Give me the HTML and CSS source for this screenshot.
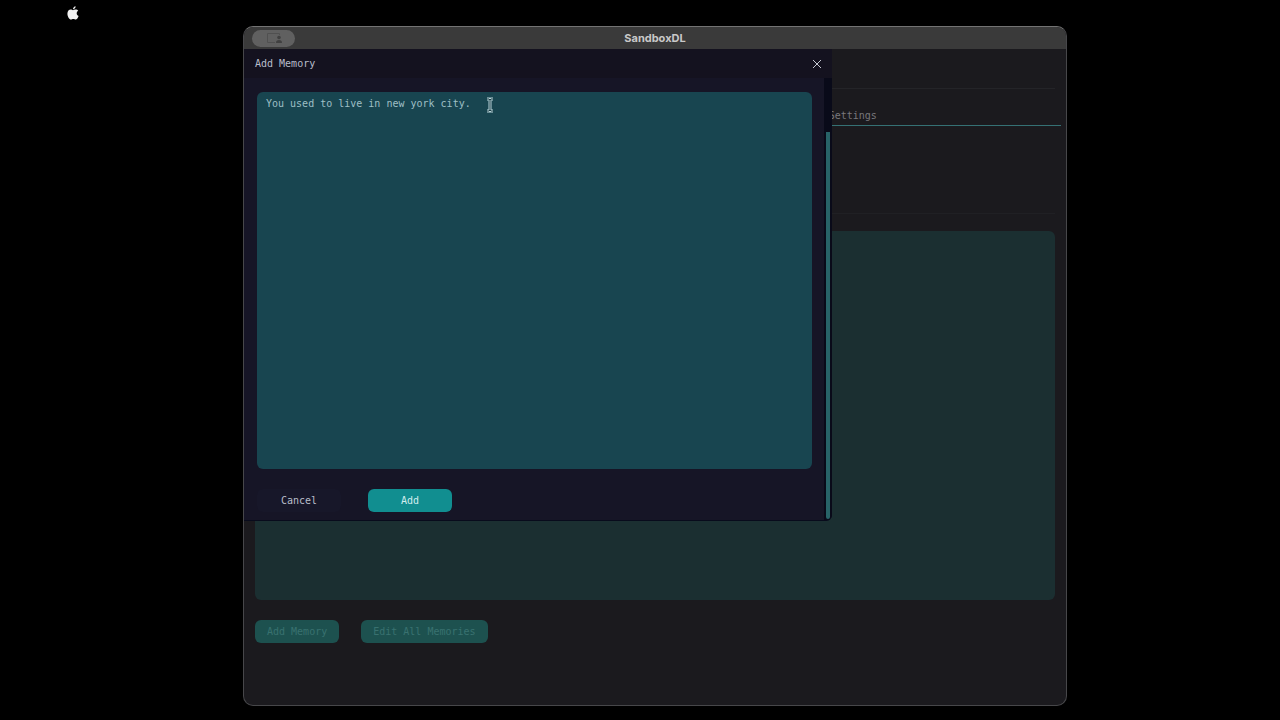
FILE: index.html
```
<!DOCTYPE html>
<html lang="en">
<head>
    <meta charset="UTF-8">
    <meta name="viewport" content="width=device-width, initial-scale=1.0">
    <title>SandboxDL</title>
    <link rel="stylesheet" href="styles.css">
</head>
<body>
    <div class="menu-bar">
        <svg class="apple" viewBox="0 0 12 14" aria-hidden="true">
            <path d="M8.6 0.3C8.7 1.9 7.5 3.2 6 3.2C5.9 1.8 7.2 0.5 8.6 0.3ZM6 4.2C6.7 4.2 7.5 3.5 8.7 3.5C9.8 3.5 10.7 4 11.2 4.8C9 6.1 9.3 9.1 11.6 10C11 11.7 9.9 13.5 8.7 13.5C7.8 13.5 7.4 13 6.3 13C5.2 13 4.8 13.5 4 13.5C2.3 13.5 0.4 10.4 0.4 7.7C0.4 5 2 3.5 3.7 3.5C4.7 3.5 5.4 4.2 6 4.2Z"/>
        </svg>
    </div>

    <div class="window">
        <header class="title-bar">
            <button class="share-pill" type="button" aria-label="Screen sharing">
                <svg viewBox="0 0 18 12" aria-hidden="true">
                    <path class="screen" d="M10 10.500H2.500V1.500H14.500V3"/>
                    <circle cx="14" cy="5.500" r="1.800"/>
                    <path d="M11 11C11 8.800 12 8 14 8C16 8 17 8.800 17 11Z"/>
                </svg>
            </button>
            <h1>SandboxDL</h1>
        </header>

        <div class="content">
            <main class="page">
                <div class="top-strip"></div>
                <nav class="tabs">
                    <a class="tab" href="#settings">Settings</a>
                </nav>
                <div class="options"></div>
                <div class="memories"></div>
                <div class="page-actions">
                    <button class="btn btn-dim" type="button">Add Memory</button>
                    <button class="btn btn-dim" type="button">Edit All Memories</button>
                </div>
            </main>

            <section class="dialog" role="dialog" aria-labelledby="dialog-title">
                <div class="dialog-header">
                    <h2 id="dialog-title"><label for="memory">Add Memory</label></h2>
                    <button class="close" type="button" aria-label="Close">
                        <svg viewBox="0 0 10 10" aria-hidden="true">
                            <path d="M1 1L9 9M9 1L1 9"/>
                        </svg>
                    </button>
                </div>
                <div class="dialog-main">
                    <form class="dialog-form">
                        <div class="editor">
                            <textarea id="memory" spellcheck="false">You used to live in new york city.</textarea>
                            <svg class="pointer" viewBox="0 0 10 16" aria-hidden="true">
                                <path class="pointer-edge" d="M2 2H4L5 3L6 2H8M5 3V13M2 14H4L5 13L6 14H8"/>
                                <path class="pointer-core" d="M2 2H4L5 3L6 2H8M5 3V13M2 14H4L5 13L6 14H8"/>
                            </svg>
                        </div>
                        <div class="dialog-actions">
                            <button class="btn btn-cancel" type="button">Cancel</button>
                            <button class="btn btn-add" type="button">Add</button>
                        </div>
                    </form>
                    <div class="scroll-track">
                        <div class="scroll-thumb"></div>
                    </div>
                </div>
            </section>
        </div>
    </div>
</body>
</html>
```
FILE: styles.css
```
* {
    box-sizing: border-box;
}
body {
    margin: 0;
    min-height: 100vh;
    display: flex;
    flex-direction: column;
    background: #000;
    color: #b9bdca;
    font-family: "DejaVu Sans Mono", "Liberation Mono", monospace;
    font-size: 10px;
    line-height: 14px;
}
h1, h2 {
    margin: 0;
    font-size: inherit;
    font-weight: normal;
}
button, textarea {
    font: inherit;
    color: inherit;
    border: none;
}
button {
    padding: 0;
    cursor: pointer;
}
svg {
    display: block;
}

/* desktop */
.menu-bar {
    height: 26px;
    padding: 6px 67px;
}
.apple {
    width: 12px;
    height: 14px;
    fill: #f2f2f2;
}
.window {
    flex: 1;
    display: flex;
    flex-direction: column;
    margin: 0 213px 14px 243px;
    border: 1px solid #47474a;
    border-top-color: #737373;
    border-radius: 10px;
    background: #1b1a1e;
    overflow: hidden;
}
.title-bar {
    display: grid;
    grid-template-columns: 1fr auto 1fr;
    align-items: center;
    height: 22px;
    padding: 0 8px;
    background: #3a3a3a;
}
.title-bar h1 {
    grid-column: 2;
    color: #c8c8c8;
    font-family: Inter, "Liberation Sans", sans-serif;
    font-size: 11px;
    font-weight: 700;
}
.share-pill {
    display: flex;
    align-items: center;
    justify-content: center;
    width: 43px;
    height: 17px;
    border-radius: 9px;
    background: #606060;
}
.share-pill svg {
    width: 18px;
    height: 12px;
    fill: #404040;
}
.share-pill .screen {
    fill: none;
    stroke: #505050;
}

/* page behind the dialog */
.content {
    flex: 1;
    display: flex;
    position: relative;
}
.page {
    flex: 1;
    display: flex;
    flex-direction: column;
    padding: 0 11px 62px;
}
.top-strip {
    height: 40px;
    border-bottom: 1px solid #242428;
}
.tabs {
    display: grid;
    grid-template-columns: 1fr 1fr;
    height: 37px;
    margin: 0 -6px 0 -11px;
    border-bottom: 1px solid #357174;
}
.tab {
    grid-column: 2;
    padding: 20px 8px 0 0;
    color: #78777c;
    text-align: center;
    text-decoration: none;
}
.options {
    height: 88px;
    border-bottom: 1px solid #202024;
}
.memories {
    flex: 1;
    margin-top: 17px;
    border-radius: 6px;
    background: #1b2f31;
}
.page-actions {
    display: flex;
    gap: 22px;
    margin-top: 20px;
}
.btn {
    height: 23px;
    padding-top: 1px;
    border-radius: 6px;
}
.btn-dim {
    padding: 1px 12px 0;
    background: #1d514f;
    color: #39716f;
}

/* dialog */
.dialog {
    position: absolute;
    top: 0;
    left: 0;
    display: flex;
    flex-direction: column;
    width: 71.5%;
    height: 72%;
    border-bottom: 1px solid #080b1c;
    border-radius: 0 0 6px 0;
    background: #161526;
    overflow: hidden;
}
.dialog-header {
    display: flex;
    align-items: center;
    justify-content: space-between;
    height: 29px;
    padding: 0 10px 0 11px;
    background: #14121f;
}
.close {
    padding: 0;
    background: none;
}
.close svg {
    width: 10px;
    height: 10px;
    fill: none;
    stroke: #c5c8d2;
}
.dialog-main {
    flex: 1;
    display: flex;
}
.dialog-form {
    flex: 1;
    display: flex;
    flex-direction: column;
    padding: 14px 12px 8px 13px;
}
.editor {
    flex: 1;
    display: flex;
    position: relative;
}
textarea {
    flex: 1;
    padding: 5px 9px;
    border-radius: 6px;
    outline: none;
    resize: none;
    background: #184550;
    color: #9ebfc5;
}
.pointer {
    position: absolute;
    top: 5px;
    left: 228px;
    width: 10px;
    height: 16px;
    fill: none;
}
.pointer-edge {
    stroke: #b9d5da;
    stroke-width: 3;
}
.pointer-core {
    stroke: #1b3d46;
    stroke-width: 1;
}
.dialog-actions {
    display: flex;
    gap: 27px;
    margin-top: 20px;
}
.btn-cancel, .btn-add {
    width: 84px;
}
.btn-cancel {
    background: #171729;
}
.btn-add {
    background: #118e90;
    color: #d2edee;
}
.scroll-track {
    width: 8px;
    padding: 54px 2px 1px;
    background: #090a19;
}
.scroll-thumb {
    height: 100%;
    border-radius: 0 0 2px 2px;
    background: #286368;
}
```
